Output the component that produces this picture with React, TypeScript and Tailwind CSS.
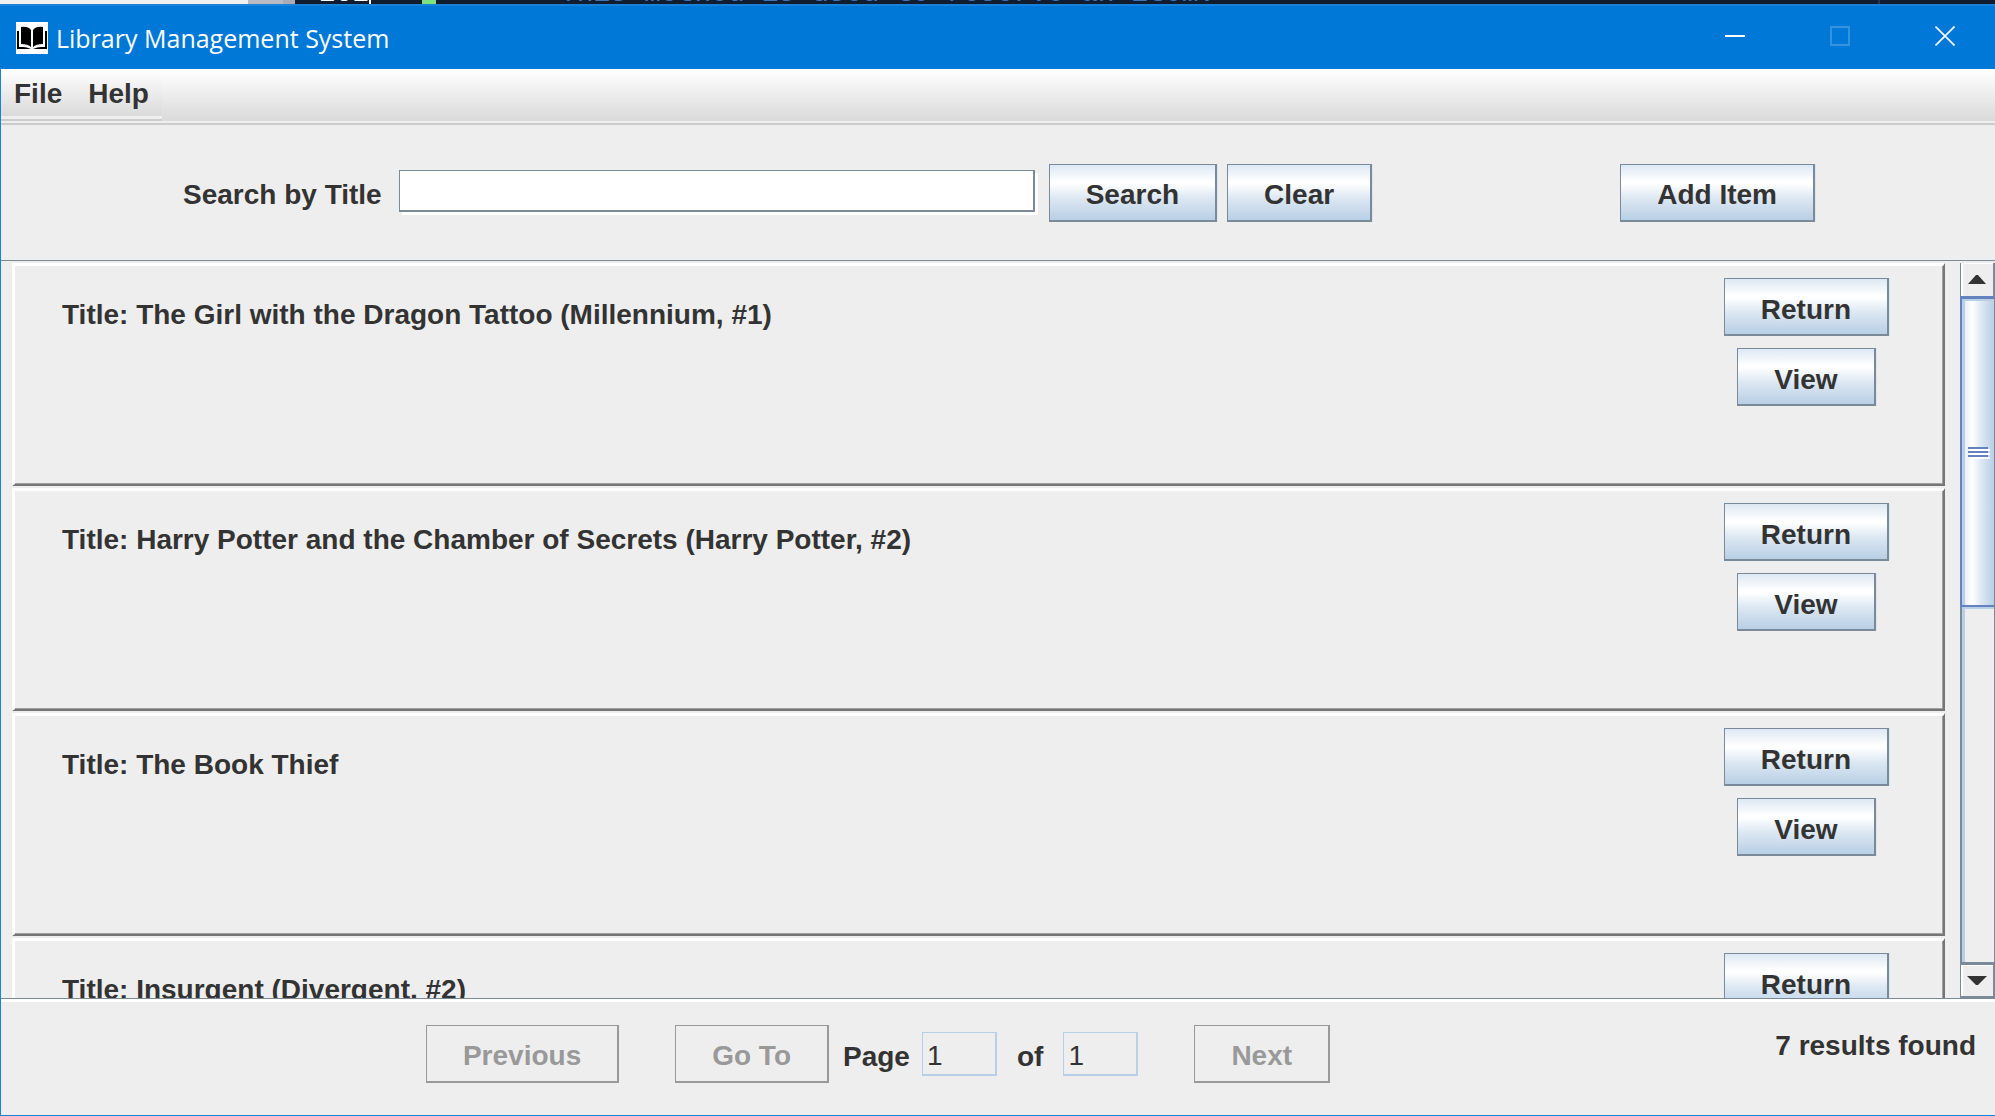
import React from "react";

const books = [
  "The Girl with the Dragon Tattoo (Millennium, #1)",
  "Harry Potter and the Chamber of Secrets (Harry Potter, #2)",
  "The Book Thief",
  "Insurgent (Divergent, #2)",
];

function Btn({ children, disabled = false }: { children: React.ReactNode; disabled?: boolean }) {
  const look = disabled
    ? "border-[#999] text-[#999]"
    : "border-[#7a8a99] text-[#333] bg-[linear-gradient(#dde8f3_0%,#fff_30%,#fff_34%,#dde8f3_60%,#b8cfe5_100%)] shadow-[1px_0_0_#dbe6f1]";
  return (
    <button
      type="button"
      disabled={disabled}
      className={`h-[58px] shrink-0 border border-r-2 border-b-2 px-9 pt-1.5 whitespace-nowrap ${look}`}
    >
      {children}
    </button>
  );
}

function BookLogo() {
  return (
    <svg viewBox="0 0 32 32" className="size-8 bg-white" aria-hidden="true">
      <path d="M1 9h2v16q8-1 12 2H1zM31 9h-2v16q-8-1-12 2h14z" fill="#000" />
      <path d="M5 5q7-1 10 3v17q-3-3-10-3zM27 5q-7-1-10 3v17q3-3 10-3z" fill="#000" />
      <path d="M4 8v16q7 0 10 2M28 8v16q-7 0-10 2" fill="none" stroke="#fff" strokeWidth="1.3" />
    </svg>
  );
}

function TitleBar() {
  return (
    <header className="flex h-[65px] shrink-0 items-center border-t-2 border-[#1883d7] bg-[#0078d7] pl-4 text-white">
      <div className="flex items-center gap-2">
        <BookLogo />
        <h1 className="font-['Open_Sans',sans-serif] text-[25px] leading-9 font-normal">Library Management System</h1>
      </div>
      <div className="-mr-0.5 ml-auto flex pb-1">
        <button type="button" aria-label="Minimize" className="flex h-14 w-[105px] items-center justify-center">
          <span className="h-0.5 w-5 bg-white" />
        </button>
        <button type="button" aria-label="Maximize" disabled className="flex h-14 w-[105px] items-center justify-center">
          <span className="size-5 border-2 border-[#3393df]" />
        </button>
        <button type="button" aria-label="Close" className="flex h-14 w-[105px] items-center justify-center">
          <svg viewBox="0 0 20 20" className="size-5" aria-hidden="true">
            <path d="M.5.5l19 19M19.5.5l-19 19" stroke="#fff" strokeWidth="1.6" />
          </svg>
        </button>
      </div>
    </header>
  );
}

function MenuBar() {
  return (
    <nav className="h-14 shrink-0 border-b-2 border-[#ccc] bg-[#eee]">
      <div className="h-[52px] bg-linear-to-b from-white to-[#dadada]">
        <div className="flex h-[52px] w-[161px] flex-col border-b-2 border-[#ccc] bg-[#eee]">
          <div className="flex h-[47px] gap-[26px] bg-linear-to-b from-white to-[#dadada] pt-0.5 pl-[13px]">
            <button type="button">File</button>
            <button type="button">Help</button>
          </div>
        </div>
      </div>
    </nav>
  );
}

function BookCard({ title }: { title: string }) {
  return (
    <li className="flex h-[223px] shrink-0 justify-between border-[3px] border-r-2 border-b-2 border-t-white border-r-[#757575] border-b-[#757575] border-l-white pt-3 pr-[54px] pl-[47px] shadow-[inset_-1px_-1px_0_#a0a0a0]">
      <h2 className="pt-[21px] leading-8">Title: {title}</h2>
      <div className="flex flex-col items-center gap-3">
        <Btn>Return</Btn>
        <Btn>View</Btn>
      </div>
    </li>
  );
}

function ScrollBar() {
  return (
    <div className="mt-0.5 flex w-[35px] shrink-0 flex-col border-r border-[#7a8a99]">
      <button
        type="button"
        aria-label="Scroll up"
        className="flex h-[33px] items-center justify-center border-r border-l border-[#7a8a99] shadow-[inset_2px_1px_0_#fff]"
      >
        <svg viewBox="0 0 18 9" className="h-[9px] w-[18px]" aria-hidden="true">
          <path d="M0 9L8 0h2l8 9z" fill="#333" />
        </svg>
      </button>
      <div className="h-[311px] border-t-[3px] border-b-2 border-l-2 border-[#6382bf] bg-[linear-gradient(90deg,#dde8f3,#fff_32%,#dde8f3_60%,#b8cfe5)] shadow-[inset_3px_2px_0_#b8cfe5]">
        <div className="flex h-full flex-col items-center justify-center gap-0.5">
          <span className="h-0.5 w-5 bg-[#6382bf] shadow-[2px_2px_0_#fff]" />
          <span className="h-0.5 w-5 bg-[#6382bf] shadow-[2px_2px_0_#fff]" />
          <span className="h-0.5 w-5 bg-[#6382bf] shadow-[2px_2px_0_#fff]" />
        </div>
      </div>
      <div className="flex-1 border-l-2 border-[#7a8a99] shadow-[inset_3px_2px_0_#b8cfe5]" />
      <button
        type="button"
        aria-label="Scroll down"
        className="flex h-9 items-center justify-center border-t-[3px] border-r border-b-2 border-l border-[#7a8a99] shadow-[inset_2px_1px_0_#fff]"
      >
        <svg viewBox="0 0 20 9" className="h-[9px] w-5" aria-hidden="true">
          <path d="M0 0h20l-9 9H9z" fill="#333" />
        </svg>
      </button>
    </div>
  );
}

function Backdrop() {
  return (
    <div aria-hidden="true" className="flex h-1 shrink-0 overflow-hidden bg-[#111c2e] font-['Liberation_Mono',monospace] text-[28px] leading-7 font-normal whitespace-pre">
      <span className="w-[248px] bg-[#f0f0f0]" />
      <span className="w-[47px] border-r-[12px] border-[#a9acb5] bg-[#b9bac2]" />
      <span className="-mt-5 ml-6 w-[52px] border-r-2 border-white text-white">202</span>
      <span className="ml-[51px] w-3.5 bg-[#7be27f]" />
      <span className="-mt-5 ml-[124px] text-[#3d74b8]">This method is used to reserve an item.</span>
      <span className="mr-[115px] ml-auto w-0.5 bg-[#25344f]" />
    </div>
  );
}

export default function App() {
  return (
    <div className="flex h-screen flex-col overflow-hidden font-['Liberation_Sans',Arial,sans-serif] text-[28px] leading-8 font-bold text-[#333]">
      <Backdrop />
      <TitleBar />
      <div className="flex min-h-0 flex-1 flex-col border-b border-l border-[#1883d7] bg-[#eee]">
        <MenuBar />
        <form className="flex h-[135px] shrink-0 items-center pr-[180px] pl-[182px]">
          <label htmlFor="search" className="pt-1">Search by Title</label>
          <input
            id="search"
            type="text"
            className="mb-1 ml-[17px] h-[42px] min-w-0 flex-[0_1_636px] border border-r-2 border-b-2 border-[#7a8a99] bg-white px-1 font-normal shadow-[3px_3px_0_#fff] outline-none"
          />
          <div className="ml-3.5 flex gap-2.5">
            <Btn>Search</Btn>
            <Btn>Clear</Btn>
          </div>
          <div className="ml-auto">
            <Btn>Add Item</Btn>
          </div>
        </form>
        <main className="flex min-h-0 flex-1 border-y border-[#7a8a99]">
          <ul className="flex min-w-0 flex-1 flex-col gap-0.5 overflow-hidden pt-0.5 pr-[15px] pl-[11px]">
            {books.map((t) => (
              <BookCard key={t} title={t} />
            ))}
          </ul>
          <ScrollBar />
        </main>
        <footer className="flex h-[116px] shrink-0 border-t-[3px] border-white">
          <div className="flex flex-1 items-center justify-center pb-2.5">
            <Btn disabled>Previous</Btn>
            <div className="mx-14 flex items-center">
              <Btn disabled>Go To</Btn>
              <label htmlFor="page" className="ml-3.5 pt-1.5">Page</label>
              <input id="page" type="text" readOnly value="1" className="ml-3 h-11 w-[75px] border border-r-2 border-b-2 border-[#b8cfe5] px-1 pt-1.5 font-normal" />
              <label htmlFor="pages" className="mx-5 pt-1.5">of</label>
              <input id="pages" type="text" readOnly value="1" className="h-11 w-[75px] border border-r-2 border-b-2 border-[#b8cfe5] px-1 pt-1.5 font-normal" />
            </div>
            <Btn disabled>Next</Btn>
          </div>
          <p className="w-[240px] pt-7 pr-[19px] text-right whitespace-nowrap">7 results found</p>
        </footer>
      </div>
    </div>
  );
}
